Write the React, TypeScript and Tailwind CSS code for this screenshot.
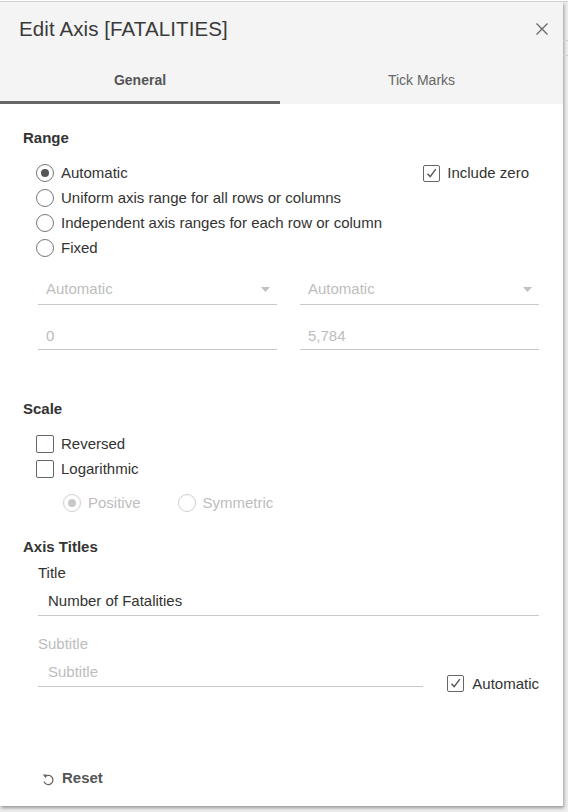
import React from "react";

const font = { fontFamily: '"Liberation Sans", Arial, sans-serif' };

function Radio({ checked, disabled }: { checked?: boolean; disabled?: boolean }) {
  const border = disabled ? "border-[#cfcfcf]" : "border-[#777]";
  const dot = disabled ? "bg-[#c8c8c8]" : "bg-[#555]";
  return (
    <span className={`w-[18px] h-[18px] rounded-full border ${border} bg-white flex items-center justify-center shrink-0`}>
      {checked && <span className={`w-[8px] h-[8px] rounded-full ${dot}`} />}
    </span>
  );
}

function Check({ checked }: { checked?: boolean }) {
  return (
    <span className="w-[17px] h-[17px] border border-[#666] rounded-[2px] bg-white flex items-center justify-center shrink-0">
      {checked && (
        <svg width="13" height="13" viewBox="0 0 13 13">
          <path d="M2.5 6.8 L5.2 9.6 L10.8 2.2" fill="none" stroke="#555" strokeWidth="1.4" />
        </svg>
      )}
    </span>
  );
}

export default function App() {
  return (
    <div className="w-[568px] h-[812px] bg-[#ececec] relative overflow-hidden" style={font}>
      <div className="h-[2px] bg-white border-b border-[#d4d4d4]" />
      <div className="absolute right-0 top-[40px] w-[5px] border-t border-[#cfcfcf]" />
      <div className="absolute right-0 top-[55px] w-[5px] border-t border-[#cfcfcf]" />
      <div className="w-[563px] h-[804px] bg-white shadow-[1px_2px_3px_rgba(0,0,0,0.35)] flex flex-col text-[#333]">
        <div className="bg-[#f4f4f4] h-[102px] flex flex-col">
          <div className="flex items-center justify-between pl-[19px] pr-[14px] h-[53px] pt-[1px]">
            <span className="text-[20.5px] text-[#3a3a3a] tracking-[0.1px]">Edit Axis [FATALITIES]</span>
            <svg width="14" height="14" viewBox="0 0 14 14">
              <path d="M1.5 1.5 L12.5 12.5 M12.5 1.5 L1.5 12.5" stroke="#666" strokeWidth="1.3" />
            </svg>
          </div>
          <div className="flex flex-1">
            <div className="w-[280px] flex items-center justify-center border-b-[3px] border-[#666] text-[14px] font-bold text-[#555] pt-[5px]">
              General
            </div>
            <div className="flex-1 flex items-center justify-center text-[14px] text-[#666] pt-[2px]">
              Tick Marks
            </div>
          </div>
        </div>

        <div className="flex flex-col pl-[23px] pr-[24px]">
          <div className="pt-[26px] text-[15px] font-bold text-[#333] leading-[16px]">Range</div>
          <div className="flex mt-[18px]">
            <div className="flex flex-col gap-[7px] pl-[13px] flex-1">
              {[
                ["Automatic", true],
                ["Uniform axis range for all rows or columns", false],
                ["Independent axis ranges for each row or column", false],
                ["Fixed", false],
              ].map(([label, checked]) => (
                <div key={label as string} className="flex items-center gap-[7px] h-[18px] text-[15px] text-[#333]">
                  <Radio checked={checked as boolean} />
                  <span>{label as string}</span>
                </div>
              ))}
            </div>
            <div className="flex items-start pr-[10px]">
              <div className="flex items-center gap-[7px] h-[18px] text-[15px]">
                <Check checked />
                <span>Include zero</span>
              </div>
            </div>
          </div>

          <div className="grid grid-cols-2 gap-x-[23px] pl-[15px] mt-[18px]">
            {["Automatic", "Automatic"].map((t, i) => (
              <div key={i} className="flex items-center justify-between border-b border-[#c8c8c8] h-[30px] pl-[8px] pr-[7px] text-[15px] text-[#bdbdbd]">
                <span>{t}</span>
                <svg width="9" height="5" viewBox="0 0 9 5">
                  <path d="M0 0 L9 0 L4.5 5 Z" fill="#c0c0c0" />
                </svg>
              </div>
            ))}
            {["0", "5,784"].map((t, i) => (
              <div key={i} className="flex items-center border-b border-[#c8c8c8] h-[26px] mt-[19px] pl-[8px] text-[15px] text-[#bdbdbd]">
                <span>{t}</span>
              </div>
            ))}
          </div>

          <div className="mt-[51px] text-[15px] font-bold leading-[16px]">Scale</div>
          <div className="flex flex-col gap-[7px] pl-[13px] mt-[18px]">
            {["Reversed", "Logarithmic"].map((t) => (
              <div key={t} className="flex items-center gap-[7px] h-[18px] text-[15px]">
                <span className="w-[18px] h-[18px] border border-[#666] rounded-[2px] bg-white shrink-0" />
                <span>{t}</span>
              </div>
            ))}
          </div>
          <div className="flex items-center pl-[40px] mt-[16px] text-[15px] text-[#bdbdbd] h-[18px]">
            <div className="flex items-center gap-[7px]">
              <Radio checked disabled />
              <span>Positive</span>
            </div>
            <div className="flex items-center gap-[7px] ml-[37px]">
              <Radio disabled />
              <span>Symmetric</span>
            </div>
          </div>

          <div className="mt-[27px] text-[15px] font-bold leading-[16px]">Axis Titles</div>
          <div className="pl-[15px] flex flex-col">
            <div className="mt-[10px] text-[15px] leading-[16px]">Title</div>
            <div className="flex items-center border-b border-[#c8c8c8] h-[29px] mt-[6px] pl-[10px] pt-[1px] text-[15px]">
              Number of Fatalities
            </div>
            <div className="mt-[20px] text-[15px] text-[#bdbdbd] leading-[16px]">Subtitle</div>
            <div className="flex items-end">
              <div className="w-[386px] flex items-center border-b border-[#c8c8c8] h-[29px] mt-[6px] pl-[10px] pt-[1px] text-[15px] text-[#bdbdbd]">
                Subtitle
              </div>
              <div className="flex items-center gap-[8px] ml-[24px] mb-[-8px] text-[15px]">
                <Check checked />
                <span>Automatic</span>
              </div>
            </div>
          </div>

          <div className="mt-[83px] pl-[19px] flex items-center gap-[8px] text-[15px] font-bold text-[#555] h-[17px]">
            <svg width="12" height="14" viewBox="0 0 12 14">
              <path d="M3.4 4.4 A4.6 4.6 0 1 1 2.0 9.6" fill="none" stroke="#666" strokeWidth="1.3" />
              <path d="M0.8 2.4 L4.8 2.4 L3.6 6.2 Z" fill="#666" />
            </svg>
            <span>Reset</span>
          </div>
        </div>
      </div>
    </div>
  );
}
